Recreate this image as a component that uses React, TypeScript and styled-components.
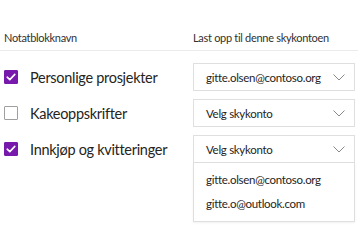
import styled, { createGlobalStyle } from 'styled-components';

const GlobalStyle = createGlobalStyle`
    body {
        margin: 0;
        background: #ffffff;
        font-family: Lato, "Noto Sans", sans-serif;
        color: #252423;
    }
`;

const notebooks = [
    { name: 'Personlige prosjekter', checked: true, account: 'gitte.olsen@contoso.org', open: false },
    { name: 'Kakeoppskrifter', checked: false, account: 'Velg skykonto', open: false },
    { name: 'Innkjøp og kvitteringer', checked: true, account: 'Velg skykonto', open: true },
];

const accounts = ['gitte.olsen@contoso.org', 'gitte.o@outlook.com'];

export default function App() {
    return (
        <Page>
            <GlobalStyle />
            <HeaderRow>
                <HeaderLabel>Notatblokknavn</HeaderLabel>
                <HeaderLabel>Last opp til denne skykontoen</HeaderLabel>
            </HeaderRow>
            <List>
                {notebooks.map((nb) => (
                    <Row key={nb.name}>
                        <NameCell>
                            <Checkbox checked={nb.checked}>
                                {nb.checked && (
                                    <svg width="10" height="8" viewBox="0 0 10 8">
                                        <path d="M1.2 4.2 L3.8 6.6 L8.8 1.4" fill="none" stroke="#ffffff" strokeWidth="1.6" strokeLinecap="round" strokeLinejoin="round" />
                                    </svg>
                                )}
                            </Checkbox>
                            <Name>{nb.name}</Name>
                        </NameCell>
                        <DropdownWrap>
                            <Dropdown>
                                <span>{nb.account}</span>
                                <svg width="12" height="7" viewBox="0 0 12 7">
                                    <path d="M0.5 0.5 L6 6 L11.5 0.5" fill="none" stroke="#8a8886" strokeWidth="1" />
                                </svg>
                            </Dropdown>
                            {nb.open && (
                                <Menu>
                                    {accounts.map((a) => (
                                        <MenuItem key={a}>{a}</MenuItem>
                                    ))}
                                </Menu>
                            )}
                        </DropdownWrap>
                    </Row>
                ))}
            </List>
        </Page>
    );
}

const Page = styled.div`
    width: 358px;
    height: 250px;
    overflow: hidden;
`;

const HeaderRow = styled.div`
    display: grid;
    grid-template-columns: 189px 1fr;
    align-items: end;
    height: 51px;
    padding: 0 3px 5px 4px;
    box-sizing: border-box;
    border-bottom: 1px solid #ebebeb;
`;

const HeaderLabel = styled.div`
    font-size: 11px;
    line-height: 14px;
    letter-spacing: -0.3px;
    color: #323130;
`;

const List = styled.div`
    display: flex;
    flex-direction: column;
    gap: 8px;
    padding: 12px 3px 0 4px;
`;

const Row = styled.div`
    display: grid;
    grid-template-columns: 189px 1fr;
    align-items: center;
    height: 28px;
`;

const NameCell = styled.div`
    display: flex;
    align-items: center;
    gap: 12px;
`;

const Checkbox = styled.div<{ checked: boolean }>`
    width: 14px;
    height: 14px;
    box-sizing: border-box;
    border: 1px solid ${(p) => (p.checked ? '#7719aa' : '#a19f9d')};
    background: ${(p) => (p.checked ? '#7719aa' : '#ffffff')};
    border-radius: 1px;
    display: flex;
    align-items: center;
    justify-content: center;
`;

const Name = styled.div`
    font-size: 14.5px;
    letter-spacing: -0.3px;
    color: #252423;
`;

const DropdownWrap = styled.div`
    position: relative;
`;

const Dropdown = styled.div`
    height: 28px;
    box-sizing: border-box;
    border: 1px solid #e1dfdd;
    display: flex;
    align-items: center;
    justify-content: space-between;
    padding: 0 9px 0 12px;
    font-size: 11.5px;
    letter-spacing: -0.3px;
    color: #252423;
`;

const Menu = styled.div`
    position: absolute;
    top: 28px;
    left: 0;
    right: 0;
    border: 1px solid #e1dfdd;
    border-top: none;
    background: #ffffff;
    box-shadow: 0 1px 2px rgba(0, 0, 0, 0.06);
    padding: 4px 0 6px;
`;

const MenuItem = styled.div`
    height: 24px;
    display: flex;
    align-items: center;
    padding: 0 12px;
    font-size: 11.5px;
    letter-spacing: -0.3px;
    color: #252423;
`;
